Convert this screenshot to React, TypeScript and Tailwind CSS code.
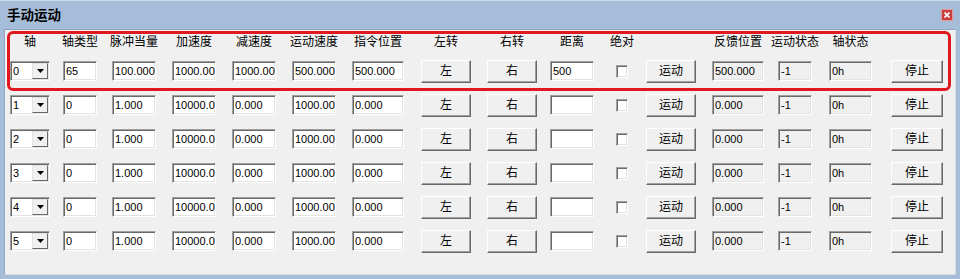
import React from 'react'

const font = { fontFamily: '"Liberation Sans", "Noto Sans CJK SC", sans-serif' }

type Col = { w: string; ml: string; head: string }

// column widths + left gaps, measured off the window
const cols: Col[] = [
  { w: 'w-[40px]', ml: 'ml-[5px]', head: '轴' },
  { w: 'w-[34px]', ml: 'ml-[13px]', head: '轴类型' },
  { w: 'w-[44px]', ml: 'ml-[15px]', head: '脉冲当量' },
  { w: 'w-[44px]', ml: 'ml-[16px]', head: '加速度' },
  { w: 'w-[44px]', ml: 'ml-[16px]', head: '减速度' },
  { w: 'w-[44px]', ml: 'ml-[16px]', head: '运动速度' },
  { w: 'w-[52px]', ml: 'ml-[16px]', head: '指令位置' },
  { w: 'w-[50px]', ml: 'ml-[17px]', head: '左转' },
  { w: 'w-[50px]', ml: 'ml-[16px]', head: '右转' },
  { w: 'w-[44px]', ml: 'ml-[13px]', head: '距离' },
  { w: 'w-[12px]', ml: 'ml-[22px]', head: '绝对' },
  { w: 'w-[50px]', ml: 'ml-[18px]', head: '' },
  { w: 'w-[52px]', ml: 'ml-[16px]', head: '反馈位置' },
  { w: 'w-[34px]', ml: 'ml-[14px]', head: '运动状态' },
  { w: 'w-[43px]', ml: 'ml-[17px]', head: '轴状态' },
  { w: 'w-[52px]', ml: 'ml-[19px]', head: '' },
]

const rows = [
  { type: '65', pulse: '100.000', acc: '1000.00', dec: '1000.00', speed: '500.000', cmd: '500.000', dist: '500', fb: '500.000' },
  ...[1, 2, 3, 4, 5].map(() => ({ type: '0', pulse: '1.000', acc: '10000.0', dec: '0.000', speed: '1000.00', cmd: '0.000', dist: '', fb: '0.000' })),
]

const sunken =
  'border border-t-[#a0a0a0] border-l-[#a0a0a0] border-b-white border-r-white shadow-[inset_1px_1px_0_#696969,inset_-1px_-1px_0_#e3e3e3]'

function Field({ value, readOnly }: { value: string; readOnly?: boolean }) {
  return (
    <div
      className={`h-[20px] w-full overflow-hidden whitespace-nowrap pl-[2px] text-[11px] leading-[18px] text-black ${sunken} ${readOnly ? 'bg-[#f0f0f0]' : 'bg-white'}`}
    >
      {value}
    </div>
  )
}

function Btn({ label }: { label: string }) {
  return (
    <div className="flex h-[23px] w-full items-center justify-center border border-t-white border-l-white border-b-[#696969] border-r-[#696969] bg-[#f0f0f0] text-[12px] text-black shadow-[inset_-1px_-1px_0_#a0a0a0]">
      {label}
    </div>
  )
}

function Combo({ value }: { value: string }) {
  return (
    <div className={`flex h-[20px] w-full items-center bg-white ${sunken}`}>
      <span className="flex-1 pl-[2px] text-[11px] leading-[18px]">{value}</span>
      <div className="mr-[1px] flex h-[16px] w-[16px] items-center justify-center border border-t-[#e3e3e3] border-l-[#e3e3e3] border-b-[#696969] border-r-[#696969] bg-[#f0f0f0]">
        <svg width="7" height="4" viewBox="0 0 7 4">
          <path d="M0 0h7L3.5 4z" fill="#000" />
        </svg>
      </div>
    </div>
  )
}

function Check() {
  return <div className={`h-[13px] w-[13px] bg-white ${sunken}`} />
}

export default function App() {
  return (
    <div className="relative flex h-[279px] w-[960px] flex-col bg-[#a6bdd9]" style={font}>
      {/* title bar */}
      <div className="flex h-[29px] items-center justify-between border-t border-t-[#c9d8ea] pl-[7px] pr-[7px]">
        <span className="text-[13.5px] font-bold leading-none text-black" style={{ fontFamily: '"Noto Sans CJK SC", sans-serif' }}>
          手动运动
        </span>
        <div className="flex h-[12px] w-[12px] items-center justify-center border border-[#e29a98] bg-[#c5403f]">
          <svg width="6" height="6" viewBox="0 0 6 6">
            <path d="M0.5 0.5l5 5M5.5 0.5l-5 5" stroke="#fff" strokeWidth="1.6" />
          </svg>
        </div>
      </div>

      {/* body */}
      <div className="mx-[4px] mb-[4px] flex-1 border border-t-[#8fa5bf] border-l-[#8fa5bf] border-b-[#d8dde3] border-r-[#d8dde3] bg-[#f0f0f0]">
        <div className="flex h-[24px] items-start pt-[4px]">
          {cols.map((c, i) => (
            <div key={i} className={`${c.w} ${c.ml} flex shrink-0 justify-center`}>
              <span className="whitespace-nowrap text-[12px] leading-[14px] text-black" style={{ fontFamily: '"Noto Sans CJK SC", sans-serif' }}>
                {c.head}
              </span>
            </div>
          ))}
        </div>

        {rows.map((r, ri) => {
          const cells = [
            <Combo value={String(ri)} />,
            <Field value={r.type} />,
            <Field value={r.pulse} />,
            <Field value={r.acc} />,
            <Field value={r.dec} />,
            <Field value={r.speed} />,
            <Field value={r.cmd} />,
            <Btn label="左" />,
            <Btn label="右" />,
            <Field value={r.dist} />,
            <Check />,
            <Btn label="运动" />,
            <Field value={r.fb} readOnly />,
            <Field value="-1" readOnly />,
            <Field value="0h" readOnly />,
            <Btn label="停止" />,
          ]
          return (
            <div key={ri} className="flex h-[34px] items-center">
              {cells.map((cell, ci) => (
                <div key={ci} className={`${cols[ci].w} ${cols[ci].ml} flex shrink-0 items-center`}>
                  {cell}
                </div>
              ))}
            </div>
          )
        })}
      </div>

      {/* red annotation frame around the first axis */}
      <div className="pointer-events-none absolute left-[7px] top-[31px] h-[60px] w-[944px] rounded-[6px] border-[3px] border-[#e0191e]" />
    </div>
  )
}
